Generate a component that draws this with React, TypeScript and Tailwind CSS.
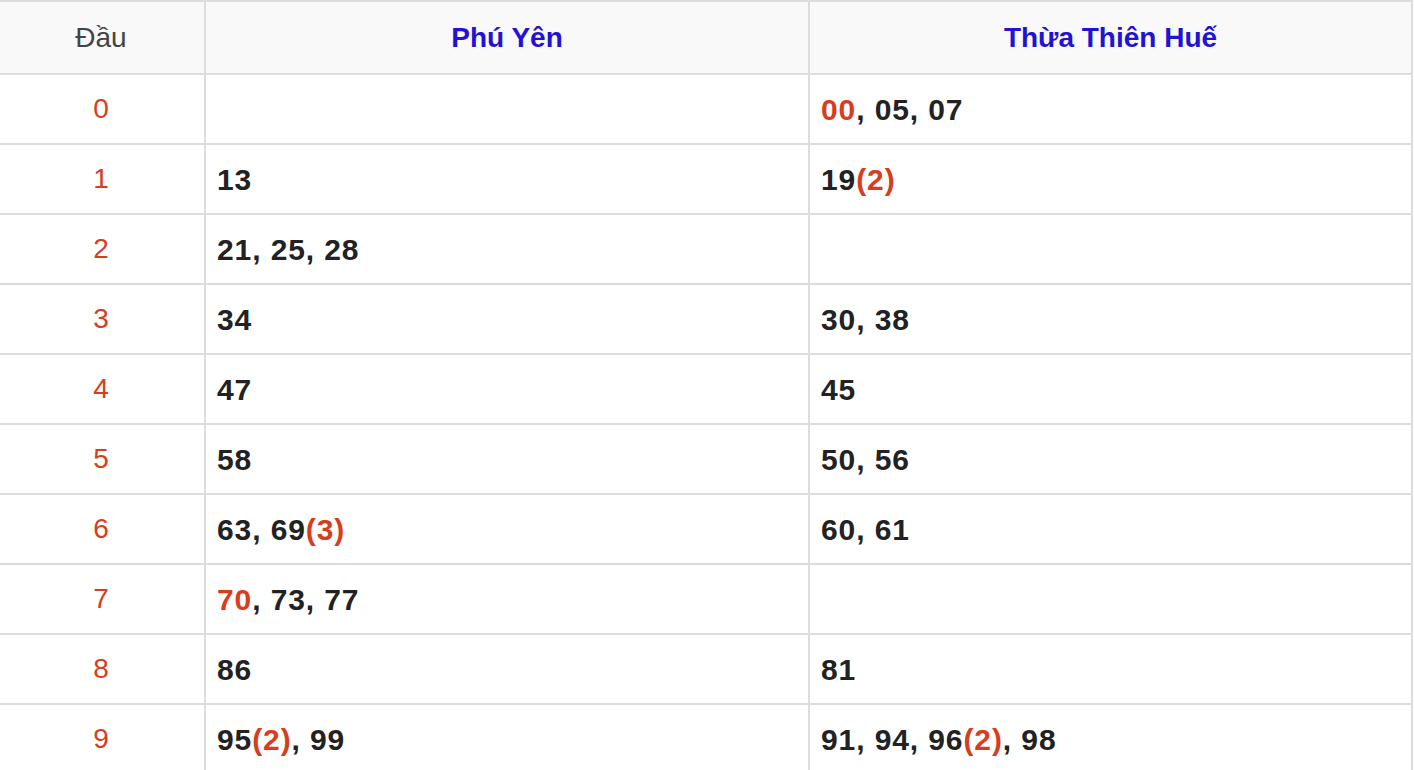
import React from "react";

type Part = { t: string; red?: boolean };

const R = (t: string): Part => ({ t, red: true });
const B = (t: string): Part => ({ t });

const rows: { d: string; a: Part[]; b: Part[] }[] = [
  { d: "0", a: [], b: [R("00"), B(", 05, 07")] },
  { d: "1", a: [B("13")], b: [B("19"), R("(2)")] },
  { d: "2", a: [B("21, 25, 28")], b: [] },
  { d: "3", a: [B("34")], b: [B("30, 38")] },
  { d: "4", a: [B("47")], b: [B("45")] },
  { d: "5", a: [B("58")], b: [B("50, 56")] },
  { d: "6", a: [B("63, 69"), R("(3)")], b: [B("60, 61")] },
  { d: "7", a: [R("70"), B(", 73, 77")], b: [] },
  { d: "8", a: [B("86")], b: [B("81")] },
  { d: "9", a: [B("95"), R("(2)"), B(", 99")], b: [B("91, 94, 96"), R("(2)"), B(", 98")] },
];

function Cell({ parts }: { parts: Part[] }) {
  return (
    <div className="border-l-2 border-b-2 border-[#dddddd] h-[70px] flex items-center pl-[11px] text-[30px] font-bold tracking-[0.9px] text-[#222222]">
      {parts.map((p, i) => (
        <span key={i} className={p.red ? "text-[#d63e1e]" : ""}>
          {p.t}
        </span>
      ))}
    </div>
  );
}

export default function App() {
  return (
    <div className="bg-white w-[1414px] h-[770px] overflow-hidden" style={{ fontFamily: '"Liberation Sans", Arial, sans-serif' }}>
      <div className="w-[1415px] -ml-[2px] border-t-2 border-r-2 border-[#dddddd]">
        <div className="grid grid-cols-[206px_604px_603px] bg-[#f9f9f9]">
          <div className="border-l-2 border-b-2 border-[#dddddd] h-[73px] flex items-center justify-center pr-[2px] text-[28px] text-[#444444]">
            Đầu
          </div>
          <div className="border-l-2 border-b-2 border-[#dddddd] h-[73px] flex items-center justify-center text-[28px] font-bold text-[#2211d6]">
            Phú Yên
          </div>
          <div className="border-l-2 border-b-2 border-[#dddddd] h-[73px] flex items-center justify-center text-[28px] font-bold text-[#2211d6]">
            Thừa Thiên Huế
          </div>
        </div>
        {rows.map((r) => (
          <div key={r.d} className="grid grid-cols-[206px_604px_603px] bg-white">
            <div className="border-l-2 border-b-2 border-[#dddddd] h-[70px] flex items-center justify-center pr-[2px] text-[28px] text-[#d63e1e]">
              {r.d}
            </div>
            <Cell parts={r.a} />
            <Cell parts={r.b} />
          </div>
        ))}
      </div>
    </div>
  );
}
